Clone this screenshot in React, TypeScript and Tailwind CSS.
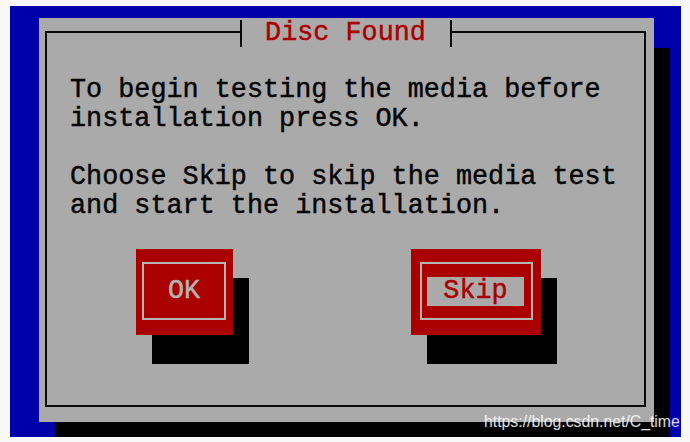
export default function App() {
  return (
    <div className="relative w-[690px] h-[442px] bg-[#f8f8f8] pt-[6px] pl-[10px]">
      <div className="w-[671px] h-[431px] bg-[#0000aa] overflow-hidden pt-[12px] pl-[29px]">
        <div className="w-[615px] h-[404px] bg-[#aaaaaa] shadow-[16px_30px_0_0_#000] pt-[13px] pl-[6px] pr-[8px] pb-[15px] font-['Liberation_Mono','DejaVu_Sans_Mono',monospace] text-[26.8px] leading-[29px] [-webkit-text-stroke:0.45px]">
          <div className="h-full border-2 border-[#0a0a0a]">
            <div className="flex justify-center -mt-[13px] h-[27px]">
              <div className="w-[212px] h-[27px] bg-[#aaaaaa] border-x-2 border-[#0a0a0a] flex items-center justify-center text-[#aa0000] leading-[27px]">
                Disc Found
              </div>
            </div>
            <div className="mt-[29px] pl-[23px] text-[#050505] whitespace-pre">
              <div>To begin testing the media before</div>
              <div>installation press OK.</div>
              <div>&nbsp;</div>
              <div>Choose Skip to skip the media test</div>
              <div>and start the installation.</div>
            </div>
            <div className="mt-[28px] flex">
              <div className="ml-[89px] w-[97px] h-[86px] bg-[#aa0000] shadow-[16px_29px_0_0_#000] pt-[13px] pl-[6px] pr-[7px] pb-[15px]">
                <div className="h-full border-2 border-[#b4b4b4] flex items-center justify-center text-[#b4b4b4]">
                  OK
                </div>
              </div>
              <div className="ml-[178px] w-[130px] h-[86px] bg-[#aa0000] shadow-[16px_29px_0_0_#000] pt-[13px] pl-[9px] pr-[8px] pb-[15px]">
                <div className="h-full border-2 border-[#b4b4b4] pt-[13px] pl-[5px]">
                  <div className="w-[97px] h-[29px] bg-[#aaaaaa] flex items-center justify-center text-[#aa0000]">
                    Skip
                  </div>
                </div>
              </div>
            </div>
          </div>
        </div>
      </div>
      <div className="absolute left-[484px] top-[412px] font-['Liberation_Sans',Arial,sans-serif] text-[15.8px] leading-[20px] text-white/85">
        https://blog.csdn.net/C_time
      </div>
    </div>
  );
}
